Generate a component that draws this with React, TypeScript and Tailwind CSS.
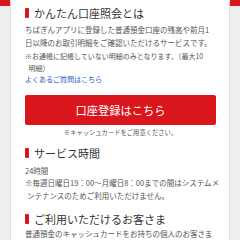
const jp = { fontFamily: '"Noto Sans CJK JP", "Noto Sans", sans-serif' };

function Heading({ children }: { children: React.ReactNode }) {
  return (
    <div className="flex items-center gap-[5px] h-[14px]">
      <span className="w-[4px] h-[10px] bg-[#d8161c] rounded-[1px]" />
      <h2 className="text-[11px] leading-[14px] text-[#333] whitespace-nowrap">{children}</h2>
    </div>
  );
}

export default function App() {
  return (
    <div
      className="w-[240px] h-[240px] overflow-hidden bg-[linear-gradient(to_bottom,#d8161c_6px,#efefef_6px)]"
      style={jp}
    >
      <div className="mx-[10px] h-full bg-white border-x border-[#dedede] pl-[14px] pr-[14px] pt-[6px]">
        <Heading>かんたん口座照会とは</Heading>

        <p className="mt-[2.5px] text-[7.5px] leading-[13px] text-[#555] whitespace-nowrap">
          ちばぎんアプリに登録した普通預金口座の残高や前月1
          <br />
          日以降のお取引明細をご確認いただけるサービスです。
        </p>

        <p className="mt-[1.5px] text-[7px] leading-[12px] text-[#555] whitespace-nowrap pl-[3.5px] indent-[-3.5px]">
          ※お通帳に記帳していない明細のみとなります。（最大10
          <br />
          明細）
        </p>

        <a href="#" className="block text-[7px] leading-[10px] text-[#1f5cc8] whitespace-nowrap">
          よくあるご質問はこちら
        </a>

        <button
          type="button"
          className="mt-[11px] w-[191px] h-[30px] bg-[#d8161c] rounded-[2px] text-white text-[11.25px] leading-[30px]"
        >
          口座登録はこちら
        </button>

        <p className="mt-[3px] w-[191px] text-center text-[6.3px] leading-[10px] text-[#555] whitespace-nowrap">
          ※キャッシュカードをご用意ください。
        </p>

        <div className="mt-[7.5px]">
          <Heading>サービス時間</Heading>
        </div>

        <p className="mt-[4.5px] text-[7.5px] leading-[13px] text-[#555]">24時間</p>

        <p className="text-[7.5px] leading-[12.5px] text-[#555] whitespace-nowrap pl-[2px] indent-[-2px]">
          ※毎週日曜日19：00～月曜日8：00までの間はシステムメ
          <br />
          ンテナンスのためご利用いただけません。
        </p>

        <div className="mt-[9.5px]">
          <Heading>ご利用いただけるお客さま</Heading>
        </div>

        <p className="mt-[1.5px] text-[7.5px] leading-[13px] text-[#555] whitespace-nowrap">
          普通預金のキャッシュカードをお持ちの個人のお客さま
        </p>
      </div>
    </div>
  );
}
